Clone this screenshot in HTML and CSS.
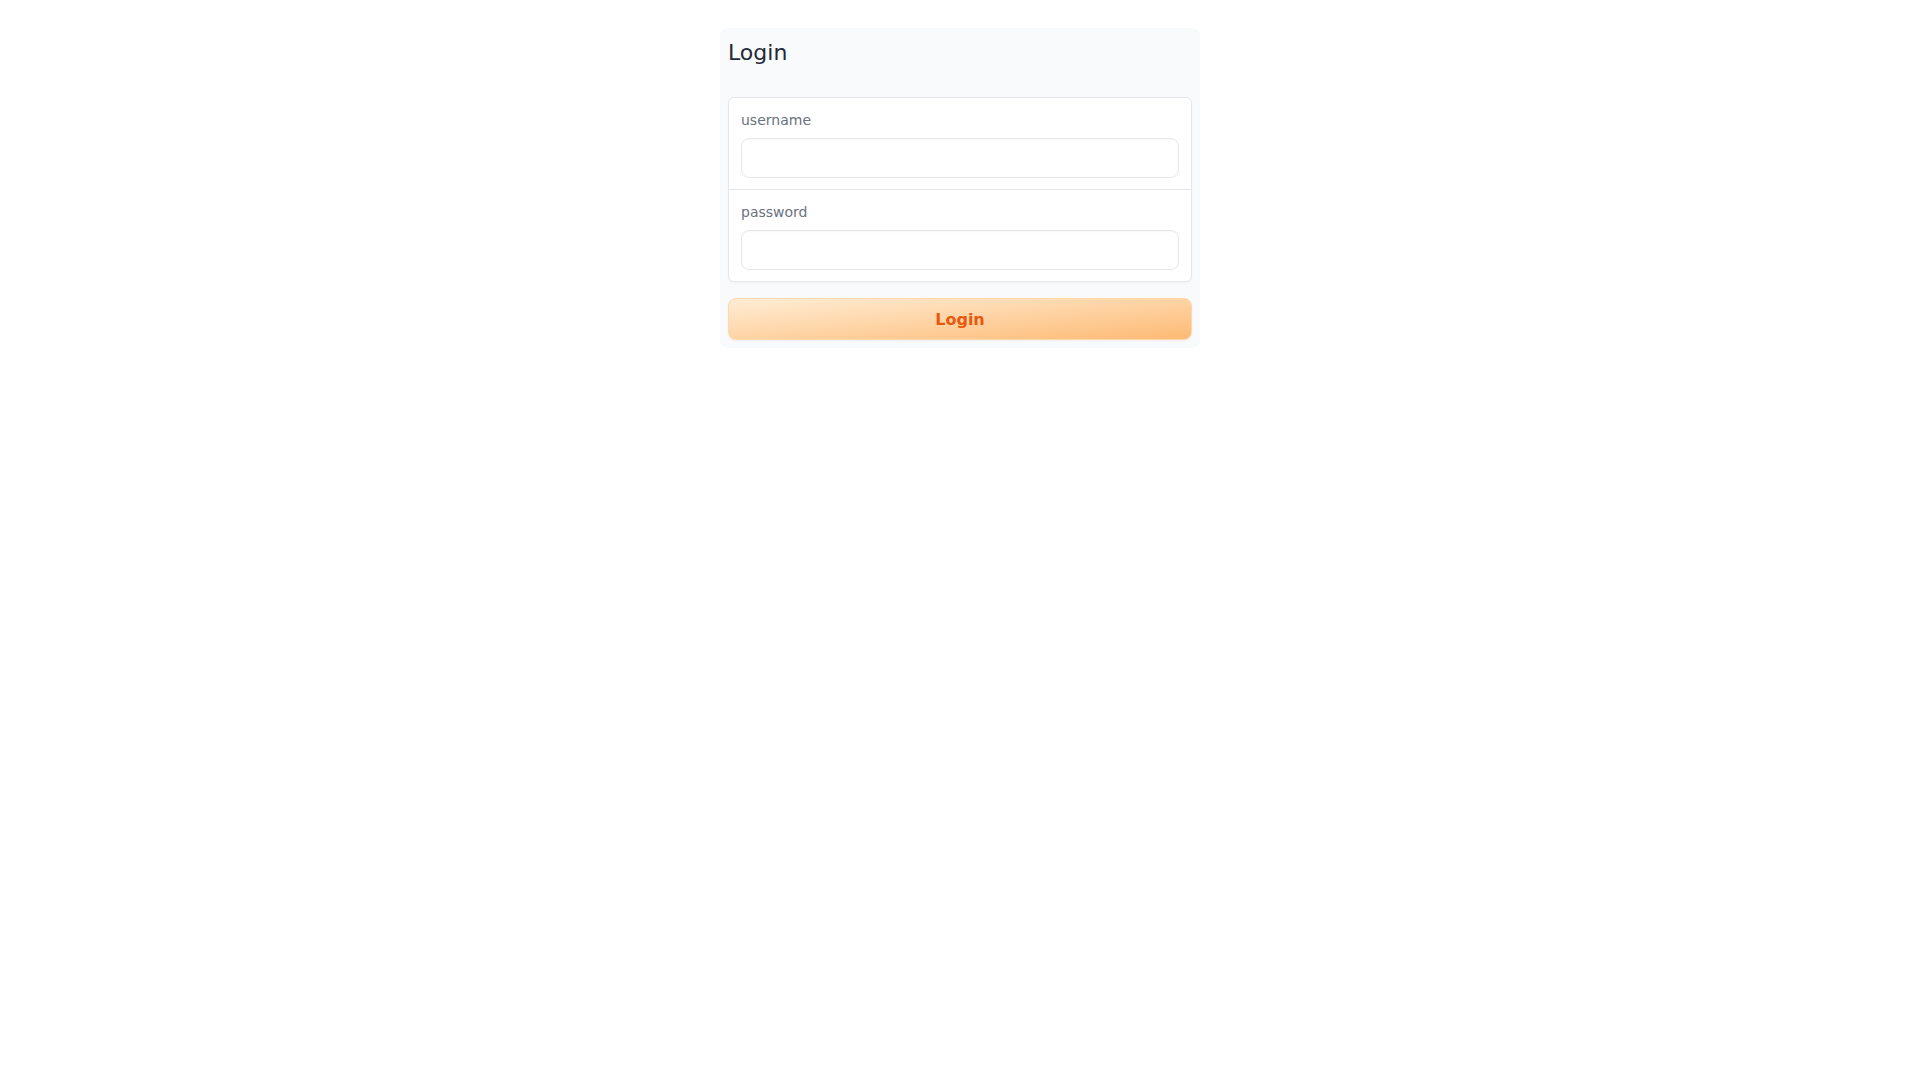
FILE: index.html
```html
<!DOCTYPE html>
<html lang="en">
<head>
    <meta charset="UTF-8">
    <meta name="viewport" content="width=device-width, initial-scale=1.0">
    <title>Login</title>
    <link rel="stylesheet" href="styles.css">
</head>
<body>
    <div class="login-card">
        <h2>Login</h2>
        <form id="loginForm" onsubmit="return false">
            <div class="field-group">
                <div class="field">
                    <label for="username">username</label>
                    <input type="text" id="username" name="username">
                </div>
                <div class="field">
                    <label for="password">password</label>
                    <input type="password" id="password" name="password">
                </div>
            </div>
            <button type="submit">Login</button>
        </form>
    </div>
</body>
</html>
```

FILE: styles.css
```css
body {
    font-family: "DejaVu Sans", sans-serif;
    background-color: #fff;
    margin: 0;
    padding: 28px 0 0;
}

.login-card {
    width: 480px;
    margin: 0 auto;
    box-sizing: border-box;
    padding: 8px;
    background-color: #f9fafb;
    border-radius: 8px;
}

h2 {
    font-size: 22px;
    font-weight: normal;
    line-height: 28px;
    color: #1f2937;
    margin: 3px 0 30px;
}

.field-group {
    background-color: #fff;
    border: 1px solid #e5e7eb;
    border-radius: 6px;
    box-shadow: 0 1px 2px rgba(0, 0, 0, 0.04);
}

.field {
    display: flex;
    flex-direction: column;
    gap: 8px;
    padding: 12px 12px 11px;
}

.field + .field {
    border-top: 1px solid #e5e7eb;
}

label {
    font-size: 14px;
    line-height: 20px;
    color: #6b7280;
}

input[type="text"],
input[type="password"] {
    height: 40px;
    box-sizing: border-box;
    padding: 8px 12px;
    font-family: inherit;
    font-size: 14px;
    border: 1px solid #e5e7eb;
    border-radius: 8px;
    background-color: #fff;
    box-shadow: inset 0 1px 2px rgba(0, 0, 0, 0.03);
    outline: none;
}

button {
    display: block;
    width: 100%;
    height: 42px;
    margin-top: 16px;
    font-family: inherit;
    font-size: 16px;
    font-weight: bold;
    color: #ea580c;
    background: linear-gradient(to bottom right, #ffedd5, #fdba74);
    border: 1px solid #fed7aa;
    border-radius: 8px;
    box-shadow: 0 1px 2px rgba(0, 0, 0, 0.05);
    cursor: pointer;
}
```
